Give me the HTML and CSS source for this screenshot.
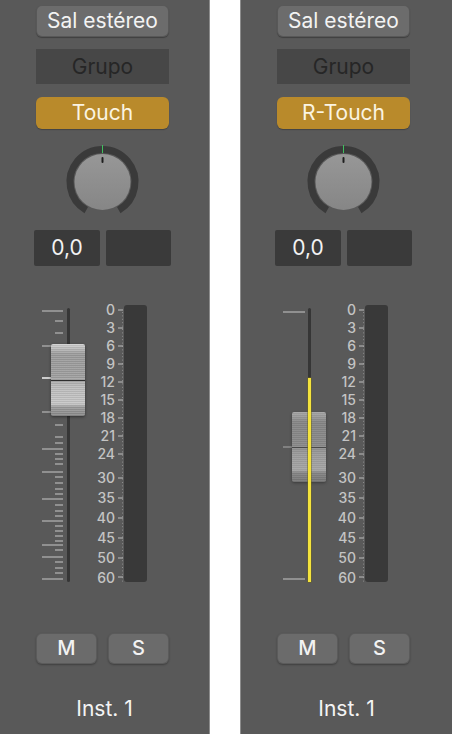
FILE: index.html
```html
<!DOCTYPE html>
<html>
<head>
    <title>Mezclador</title>
    <link rel="stylesheet" href="styles.css">
</head>
<body>
    <div class="mixer">
        <!-- Canal 1: Touch -->
        <div class="strip strip-left">
            <div class="out-btn">Sal estéreo</div>
            <div class="group-slot">Grupo</div>
            <div class="auto-btn">Touch</div>
            <svg class="knob" width="77" height="76" viewBox="0 0 77 76">
                <defs>
                    <linearGradient id="knobA" x1="0" y1="0" x2="0" y2="1">
                        <stop offset="0" stop-color="#979797"/>
                        <stop offset="1" stop-color="#868686"/>
                    </linearGradient>
                </defs>
                <path d="M22.25 66.15 A32.5 32.5 0 1 1 54.75 66.15" fill="none" stroke="#3a3a3a" stroke-width="7"/>
                <circle cx="38.5" cy="38" r="28" fill="url(#knobA)"/>
                <rect x="38" y="1" width="1" height="8" fill="#3fbf5e"/>
                <rect x="37.5" y="13" width="2" height="6" rx="1" fill="#1e1e1e"/>
            </svg>
            <div class="values">
                <div class="value-box">0,0</div>
                <div class="value-box"></div>
            </div>
            <div class="fader-sec">
                <div class="fader">
                    <svg width="54" height="285" viewBox="0 0 54 285">
                        <rect x="31" y="8" width="3" height="274" rx="1.5" fill="#363636"/>
                        <g fill="#a3a3a3">
                            <rect x="6" y="10.25" width="21" height="1.5"/>
                            <rect x="6" y="45.25" width="21" height="1.5"/>
                            <rect x="6" y="111.25" width="21" height="1.5"/>
                            <rect x="6" y="148.25" width="21" height="1.5"/>
                            <rect x="6" y="171.25" width="21" height="1.5"/>
                            <rect x="6" y="198.25" width="21" height="1.5"/>
                            <rect x="6" y="220.25" width="21" height="1.5"/>
                            <rect x="6" y="244.25" width="21" height="1.5"/>
                            <rect x="6" y="256.25" width="21" height="1.5"/>
                            <rect x="6" y="278.25" width="21" height="1.5"/>
                            <rect x="19" y="20.25" width="8" height="1.5"/>
                            <rect x="19" y="32.25" width="8" height="1.5"/>
                            <rect x="19" y="124.25" width="8" height="1.5"/>
                            <rect x="19" y="136.25" width="8" height="1.5"/>
                            <rect x="19" y="142.25" width="8" height="1.5"/>
                            <rect x="19" y="153.25" width="8" height="1.5"/>
                            <rect x="19" y="158.25" width="8" height="1.5"/>
                            <rect x="19" y="163.25" width="8" height="1.5"/>
                            <rect x="19" y="176.25" width="8" height="1.5"/>
                            <rect x="19" y="182.25" width="8" height="1.5"/>
                            <rect x="19" y="188.25" width="8" height="1.5"/>
                            <rect x="19" y="193.25" width="8" height="1.5"/>
                            <rect x="19" y="204.25" width="8" height="1.5"/>
                            <rect x="19" y="210.25" width="8" height="1.5"/>
                            <rect x="19" y="215.25" width="8" height="1.5"/>
                            <rect x="19" y="225.25" width="8" height="1.5"/>
                            <rect x="19" y="230.25" width="8" height="1.5"/>
                            <rect x="19" y="235.25" width="8" height="1.5"/>
                            <rect x="19" y="240.25" width="8" height="1.5"/>
                            <rect x="19" y="249.25" width="8" height="1.5"/>
                            <rect x="19" y="261.25" width="8" height="1.5"/>
                            <rect x="19" y="267.25" width="8" height="1.5"/>
                            <rect x="19" y="272.25" width="8" height="1.5"/>
                        </g>
                        <rect x="6" y="77.25" width="10" height="1.5" fill="#f2f2f2"/>
                    </svg>
                    <div class="cap"></div>
                </div>
                <div class="scale-labels">
                    <div>0</div><div>3</div><div>6</div><div>9</div><div>12</div>
                    <div>15</div><div>18</div><div>21</div><div>24</div>
                    <div class="low gap">30</div><div class="low">35</div><div class="low">40</div>
                    <div class="low">45</div><div class="low">50</div><div class="low">60</div>
                </div>
                <svg class="scale-ticks" width="8" height="285" viewBox="0 0 8 285">
                    <line x1="6.5" y1="12" x2="6.5" y2="282" stroke="#8c8c8c" stroke-width="1" stroke-dasharray="1 2.4"/>
                    <g fill="#acacac">
                        <rect x="2" y="9.4" width="5" height="1.2"/>
                        <rect x="2" y="27.4" width="5" height="1.2"/>
                        <rect x="2" y="45.4" width="5" height="1.2"/>
                        <rect x="2" y="63.4" width="5" height="1.2"/>
                        <rect x="2" y="81.4" width="5" height="1.2"/>
                        <rect x="2" y="99.4" width="5" height="1.2"/>
                        <rect x="2" y="117.4" width="5" height="1.2"/>
                        <rect x="2" y="135.4" width="5" height="1.2"/>
                        <rect x="2" y="153.4" width="5" height="1.2"/>
                        <rect x="2" y="177.4" width="5" height="1.2"/>
                        <rect x="2" y="197.4" width="5" height="1.2"/>
                        <rect x="2" y="217.4" width="5" height="1.2"/>
                        <rect x="2" y="237.4" width="5" height="1.2"/>
                        <rect x="2" y="257.4" width="5" height="1.2"/>
                        <rect x="2" y="276.4" width="5" height="1.2"/>
                    </g>
                </svg>
                <div class="meter"></div>
            </div>
            <div class="ms-row">
                <div class="ms-btn">M</div>
                <div class="ms-btn">S</div>
            </div>
            <div class="strip-name">Inst. 1</div>
        </div>

        <!-- Canal 2: R-Touch -->
        <div class="strip strip-right">
            <div class="out-btn">Sal estéreo</div>
            <div class="group-slot">Grupo</div>
            <div class="auto-btn">R-Touch</div>
            <svg class="knob" width="77" height="76" viewBox="0 0 77 76">
                <defs>
                    <linearGradient id="knobB" x1="0" y1="0" x2="0" y2="1">
                        <stop offset="0" stop-color="#979797"/>
                        <stop offset="1" stop-color="#868686"/>
                    </linearGradient>
                </defs>
                <path d="M22.25 66.15 A32.5 32.5 0 1 1 54.75 66.15" fill="none" stroke="#3a3a3a" stroke-width="7"/>
                <circle cx="38.5" cy="38" r="28" fill="url(#knobB)"/>
                <rect x="38" y="1" width="1" height="8" fill="#3fbf5e"/>
                <rect x="37.5" y="13" width="2" height="6" rx="1" fill="#1e1e1e"/>
            </svg>
            <div class="values">
                <div class="value-box">0,0</div>
                <div class="value-box"></div>
            </div>
            <div class="fader-sec">
                <div class="fader">
                    <svg width="54" height="285" viewBox="0 0 54 285">
                        <rect x="31" y="8" width="3" height="274" rx="1.5" fill="#363636"/>
                        <rect x="6" y="11.25" width="22" height="1.5" fill="#a3a3a3"/>
                        <rect x="6" y="278.25" width="22" height="1.5" fill="#a3a3a3"/>
                        <rect x="6" y="146.25" width="10" height="1.5" fill="#8e8e8e"/>
                    </svg>
                    <div class="cap cap-dim"></div>
                    <div class="level"></div>
                </div>
                <div class="scale-labels">
                    <div>0</div><div>3</div><div>6</div><div>9</div><div>12</div>
                    <div>15</div><div>18</div><div>21</div><div>24</div>
                    <div class="low gap">30</div><div class="low">35</div><div class="low">40</div>
                    <div class="low">45</div><div class="low">50</div><div class="low">60</div>
                </div>
                <svg class="scale-ticks" width="8" height="285" viewBox="0 0 8 285">
                    <line x1="6.5" y1="12" x2="6.5" y2="282" stroke="#8c8c8c" stroke-width="1" stroke-dasharray="1 2.4"/>
                    <g fill="#acacac">
                        <rect x="2" y="9.4" width="5" height="1.2"/>
                        <rect x="2" y="27.4" width="5" height="1.2"/>
                        <rect x="2" y="45.4" width="5" height="1.2"/>
                        <rect x="2" y="63.4" width="5" height="1.2"/>
                        <rect x="2" y="81.4" width="5" height="1.2"/>
                        <rect x="2" y="99.4" width="5" height="1.2"/>
                        <rect x="2" y="117.4" width="5" height="1.2"/>
                        <rect x="2" y="135.4" width="5" height="1.2"/>
                        <rect x="2" y="153.4" width="5" height="1.2"/>
                        <rect x="2" y="177.4" width="5" height="1.2"/>
                        <rect x="2" y="197.4" width="5" height="1.2"/>
                        <rect x="2" y="217.4" width="5" height="1.2"/>
                        <rect x="2" y="237.4" width="5" height="1.2"/>
                        <rect x="2" y="257.4" width="5" height="1.2"/>
                        <rect x="2" y="276.4" width="5" height="1.2"/>
                    </g>
                </svg>
                <div class="meter"></div>
            </div>
            <div class="ms-row">
                <div class="ms-btn">M</div>
                <div class="ms-btn">S</div>
            </div>
            <div class="strip-name">Inst. 1</div>
        </div>
    </div>
</body>
</html>
```

FILE: styles.css
```css
* {
    box-sizing: border-box;
}
body {
    margin: 0;
    background: #fff;
    font-family: Inter, "Noto Sans", sans-serif;
}
.mixer {
    display: flex;
    gap: 30px;
    width: 452px;
    height: 734px;
}
.strip {
    display: flex;
    flex-direction: column;
    align-items: flex-start;
    height: 734px;
    background-color: #595959;
}
.strip-left {
    width: 210px;
    border-right: 1px solid #8c8c8c;
}
.strip-right {
    width: 212px;
    border-left: 1px solid #8c8c8c;
}
.out-btn, .group-slot, .auto-btn {
    width: 133px;
    margin-left: 36px;
    text-align: center;
    font-size: 21px;
}
.out-btn {
    margin-top: 5px;
    height: 32px;
    line-height: 32px;
    border-radius: 6px;
    background-color: #6c6c6c;
    color: #f3f3f3;
    box-shadow: inset 0 0 0 1px rgba(0,0,0,0.18), 0 1px 1px rgba(0,0,0,0.3);
}
.group-slot {
    margin-top: 12px;
    height: 35px;
    line-height: 35px;
    background-color: #474747;
    color: #262626;
}
.auto-btn {
    margin-top: 13px;
    height: 32px;
    line-height: 32px;
    border-radius: 6px;
    background-color: #b98a2b;
    color: #fbf4e2;
    box-shadow: 0 1px 1px rgba(0,0,0,0.25);
}
.knob {
    display: block;
    margin: 15px 0 0 64px;
}
.values {
    display: flex;
    gap: 6px;
    margin: 10px 0 0 34px;
}
.value-box {
    width: 66px;
    height: 36px;
    line-height: 36px;
    border-radius: 2px;
    background-color: #3a3a3a;
    color: #f2f2f2;
    text-align: center;
    font-size: 21px;
}
.value-box + .value-box {
    width: 65px;
}
.fader-sec {
    display: flex;
    height: 285px;
    margin: 34px 0 0 36px;
}
.fader {
    position: relative;
    width: 54px;
    height: 285px;
}
.fader svg {
    display: block;
}
.cap {
    position: absolute;
    left: 15px;
    top: 44px;
    width: 34px;
    height: 72px;
    border-radius: 2px;
    box-shadow: 0 1px 3px rgba(0,0,0,0.45);
    background:
        linear-gradient(to bottom, transparent 49.5%, #2e2e2e 49.5%, #2e2e2e 51%, transparent 51%),
        repeating-linear-gradient(to bottom, rgba(255,255,255,0.09) 0 1px, rgba(0,0,0,0.07) 1px 2px),
        linear-gradient(to bottom, #d2d2d2 0, #bababa 5px, #9c9c9c 10px, #a0a0a0 33px, #acacac 37px, #bcbcbc 42px, #c8c8c8 60px, #9c9c9c 63px, #8a8a8a 72px);
}
.cap-dim {
    top: 112px;
    height: 70px;
    box-shadow: 0 1px 3px rgba(0,0,0,0.35);
    background:
        linear-gradient(to bottom, transparent 49.5%, #4a4a4a 49.5%, #4a4a4a 51%, transparent 51%),
        repeating-linear-gradient(to bottom, rgba(255,255,255,0.06) 0 1px, rgba(0,0,0,0.05) 1px 2px),
        linear-gradient(to bottom, #a6a6a6 0, #999 5px, #868686 10px, #8a8a8a 33px, #929292 37px, #9c9c9c 42px, #a6a6a6 58px, #858585 61px, #767676 70px);
}
.level {
    position: absolute;
    left: 31px;
    top: 78px;
    width: 3px;
    height: 204px;
    background-color: #f4e33d;
    box-shadow: 0 0 0 0.5px #6b6420;
}
.scale-labels {
    width: 26px;
    padding: 1px 1px 0 0;
    text-align: right;
    font-size: 14px;
    font-weight: 500;
    color: #c4c4c4;
}
.scale-labels div {
    height: 18px;
    line-height: 18px;
}
.scale-labels .low {
    height: 20px;
    line-height: 20px;
}
.scale-labels .gap {
    margin-top: 5px;
}
.scale-ticks {
    display: block;
}
.meter {
    width: 23px;
    height: 277px;
    margin-top: 5px;
    border-radius: 3px;
    background-color: #393939;
}
.ms-row {
    display: flex;
    gap: 11px;
    margin: 48px 0 0 36px;
}
.ms-btn {
    width: 61px;
    height: 31px;
    line-height: 31px;
    border-radius: 6px;
    background-color: #6b6b6b;
    color: #f2f2f2;
    text-align: center;
    font-size: 20px;
    font-weight: 500;
    box-shadow: inset 0 0 0 1px rgba(0,0,0,0.15), 0 1px 2px rgba(0,0,0,0.3);
}
.strip-name {
    align-self: stretch;
    margin-top: 33px;
    height: 24px;
    line-height: 24px;
    text-align: center;
    color: #f4f4f4;
    font-size: 21px;
}
```
